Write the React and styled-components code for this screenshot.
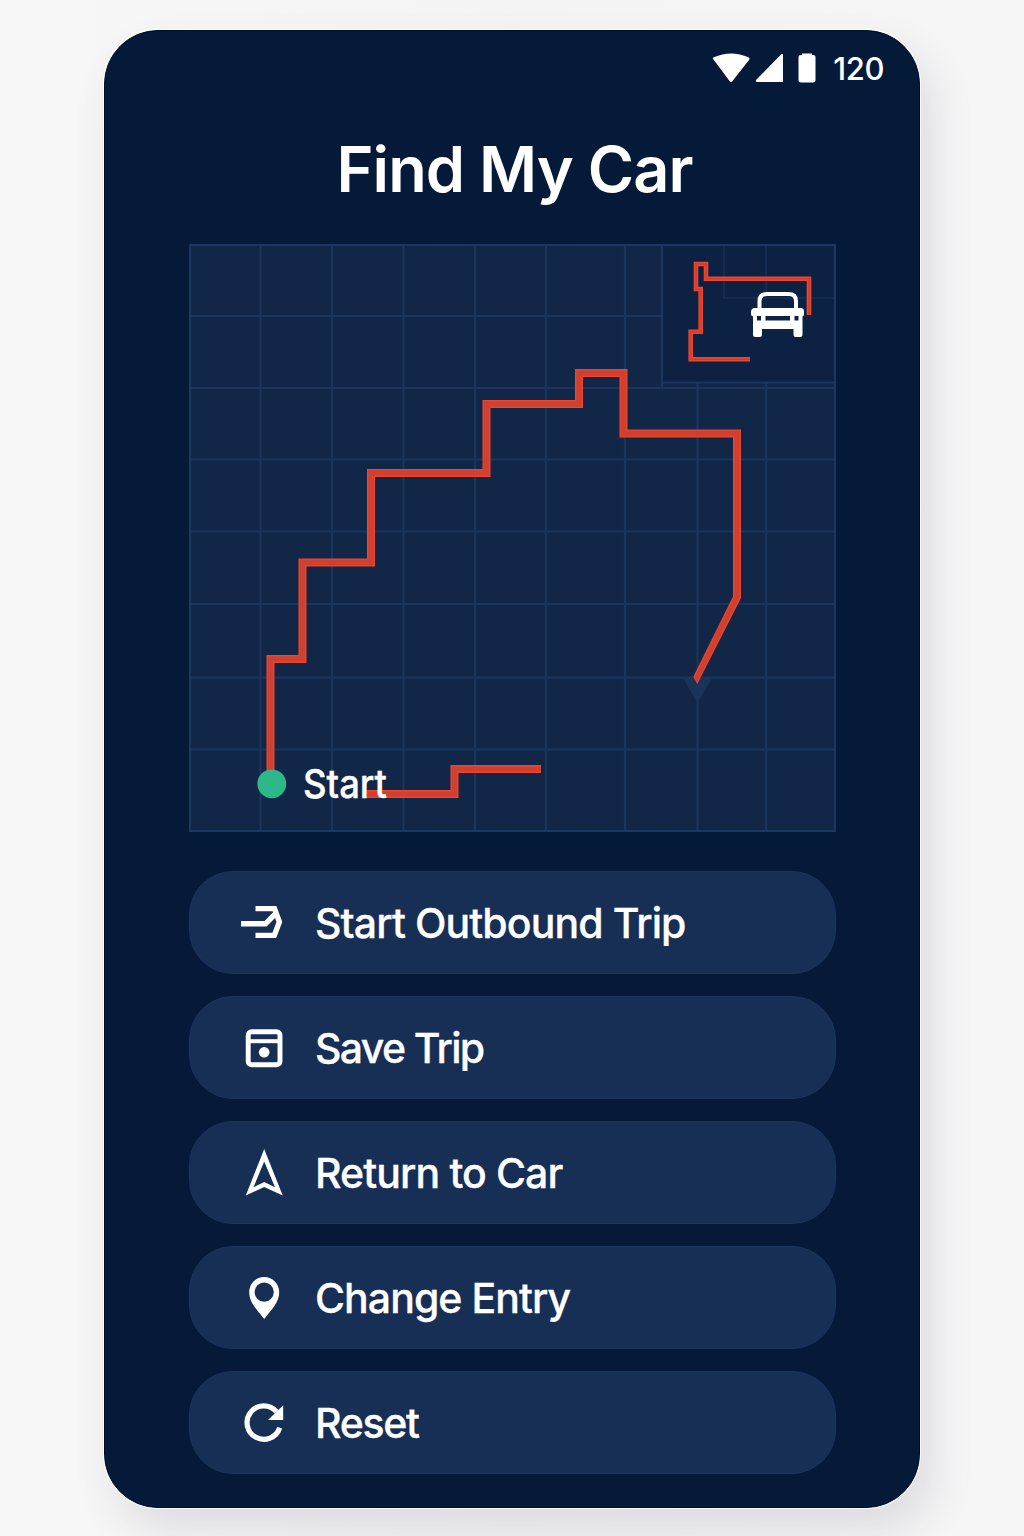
import React from "react";
import styled, { createGlobalStyle } from "styled-components";

const GlobalStyle = createGlobalStyle`
  * { box-sizing: border-box; }
  body {
    margin: 0;
    background: #f5f5f6;
    font-family: Inter, "Liberation Sans", sans-serif;
    color: #fff;
  }
`;

const Page = styled.main`
  display: flex;
  justify-content: center;
  height: 1536px;
  padding-top: 30px;
  overflow: hidden;
  background: linear-gradient(90deg, #f7f7f7, #f4f4f5 50%, #f6f6f6);
`;

const Phone = styled.section`
  width: 816px;
  height: 1478px;
  display: flex;
  flex-direction: column;
  align-items: center;
  border: 1px solid #020c25;
  border-radius: 54px;
  background: #051a38;
  box-shadow: 0 0 0 1px rgba(255, 255, 255, 0.8), 12px 22px 44px rgba(40, 40, 70, 0.12);
`;

const StatusBar = styled.header`
  align-self: stretch;
  height: 78px;
  flex: none;
  display: flex;
  justify-content: flex-end;
  align-items: center;
  padding-right: 35px;
`;

const StatusIcons = styled.svg`
  width: 106px;
  height: 32px;
  margin: 0 15px 4px 0;
`;

const StatusValue = styled.span`
  margin-bottom: 2px;
  font-size: 31px;
  font-weight: 500;
  line-height: 40px;
  letter-spacing: ${(p) => p.$tracking}px;
`;

const Title = styled.h1`
  margin: 21px 0 0 5px;
  height: 80px;
  flex: none;
  font-size: 63px;
  font-weight: 600;
  line-height: 79px;
  letter-spacing: ${(p) => p.$tracking}px;
  white-space: nowrap;
`;

const Map = styled.svg`
  width: 647px;
  height: 588px;
  flex: none;
  margin-top: 34px;
  display: block;
`;

const StartLabel = styled.text`
  font-size: 39px;
  font-weight: 500;
  fill: #fff;
  stroke: #fff;
  stroke-width: 0.4px;
`;

const Actions = styled.nav`
  width: 647px;
  margin-top: 38.5px;
  display: flex;
  flex-direction: column;
  gap: 22.2px;
`;

const ActionButton = styled.button`
  height: 103px;
  display: flex;
  align-items: center;
  gap: 25px;
  padding: 0 0 0 50.5px;
  border: 1px solid #1b355f;
  border-radius: 44px;
  background: #172e55;
  color: #fff;
  font-family: inherit;
  font-size: 41px;
  font-weight: 500;
  line-height: 52px;
  letter-spacing: ${(p) => p.$tracking}px;
  -webkit-text-stroke: 0.3px #fff;
  text-align: left;
  white-space: nowrap;
`;

const ActionLabel = styled.span`
  padding-top: 1px;
`;

const ActionIcon = styled.svg`
  width: 50px;
  height: 50px;
  flex: none;
`;

const ROUTE =
  "M270.5 772V659H302.5V562.5H371V473H486.5V404H579V373H623.5V433.5H737V597";
const BRANCH = "M366 794H454.5V769H541";
const MINI =
  "M750 359.3H690.7V331.8H700.7V289H696V264H706V278.7H809V315";

const Route = ({ d, width, inner, core = "#cf4030" }) => (
  <g fill="none" strokeMiterlimit="8">
    <path d={d} stroke="#ee452c" strokeWidth={width} />
    <path d={d} stroke={core} strokeWidth={inner} />
  </g>
);

const columns = [260.5, 332, 403.5, 475, 546, 625, 697.5, 766];
const rows = [316, 388, 459.5, 531.5, 604, 677.7, 749.5];

const RouteMap = () => (
  <Map viewBox="189 244 647 588">
    <rect x="189" y="244" width="647" height="588" fill="#122748" />
    <g stroke="#1b355d" strokeWidth="2.2">
      {columns.map((x) => (
        <line key={x} x1={x} x2={x} y1="245" y2="831" />
      ))}
      {rows.map((y) => (
        <line key={y} x1="190" x2="835" y1={y} y2={y} />
      ))}
    </g>
    <rect x="662" y="245" width="173" height="138" fill="#0d2142" />
    <g fill="none" stroke="#152c52" strokeWidth="2">
      <path d="M724 245V298H835M766 245V298" />
    </g>
    <path d="M662 245V387M662 382.5H835" stroke="#1c3660" strokeWidth="2" />
    <rect x="190" y="245" width="645" height="586" fill="none" stroke="#1c3862" strokeWidth="2" />
    <path d="M683 678H712L697.5 703Z" fill="#1a3358" />
    <Route d={ROUTE} width="8" inner="5.4" />
    <path d="M733 596.5L693.3 676.7L697.3 684L741 598V595H733Z" fill="#ee452c" />
    <path d="M734.3 596.5L694.6 677L697.3 681.8L739.7 597.5V595H734.3Z" fill="#cf4030" />
    <Route d={BRANCH} width="8" inner="5.2" />
    <Route d={MINI} width="4.6" inner="1.6" core="#cb3e34" />
    <circle cx="271.8" cy="783.8" r="14.4" fill="#2eb88a" />
    <StartLabel x="303" y="797.8" textLength="84" lengthAdjust="spacingAndGlyphs">
      Start
    </StartLabel>
    <g>
      <path
        d="M759.5 310V301Q759.5 294 767 294H788.5Q796 294 796 301V310"
        fill="none"
        stroke="#fff"
        strokeWidth="4"
      />
      <path
        fill="#fff"
        fillRule="evenodd"
        d="M754 308H801.500Q804 308.500 804 311V314Q804 316 802.5 316.500V334.500Q802.5 337 800 337H795.500Q793.500 337 793.500 334.500V329H762V334.500Q762 337 759.500 337H755.500Q753 337 753 334.500V316.500Q751 316 751 314V311Q751.500 308.500 754 308ZM757 316V320.500H761V316ZM765.500 316V320.500H790V316ZM794.500 316V320.500H798.500V316Z"
      />
    </g>
  </Map>
);

/* Every glyph sits on a 50px canvas, so all five line up in one column. */
const icons = {
  outbound: (
    <g fill="none" stroke="#fff" strokeWidth="5.400">
      <path d="M15.500 11.600H34.500L39.400 25L34.300 38.400H15.500" />
      <path d="M1 26.800H25.500L36.500 15.600" />
    </g>
  ),
  save: (
    <g fill="none" stroke="#fff">
      <rect x="8.200" y="9.700" width="31.800" height="33" rx="3.500" strokeWidth="4.900" />
      <path d="M8 19.200H40" strokeWidth="4" />
      <circle cx="24.200" cy="30.200" r="5.300" fill="#fff" stroke="none" />
    </g>
  ),
  navigate: (
    <path
      fill="#fff"
      fillRule="evenodd"
      d="M24.200 2L42.700 48.400L24.200 40L5.800 48.400ZM24.200 14.500L13.500 40.300L24.200 35L35 40.300Z"
    />
  ),
  pin: (
    <path
      fill="#fff"
      fillRule="evenodd"
      d="M24.200 4C15.800 4 9.200 10.700 9.200 19.200C9.200 29.500 17.500 37.200 24.200 46C31 37.200 39.200 29.500 39.200 19.200C39.200 10.700 32.600 4 24.200 4ZM24.200 9.500A9.600 9.600 0 1 1 24.200 28.700A9.600 9.600 0 1 1 24.200 9.500Z"
    />
  ),
  reset: (
    <g>
      <path d="M36.500 13.800A16.700 16.700 0 1 0 39.700 29.600" fill="none" stroke="#fff" strokeWidth="5.200" />
      <path d="M43.200 7.300V22H28Z" fill="#fff" />
    </g>
  ),
};

const actions = [
  { icon: "outbound", label: "Start Outbound Trip", tracking: -0.9 },
  { icon: "save", label: "Save Trip", tracking: -1.65 },
  { icon: "navigate", label: "Return to Car", tracking: -0.9 },
  { icon: "pin", label: "Change Entry", tracking: -0.95 },
  { icon: "reset", label: "Reset", tracking: -1.3 },
];

export default function App() {
  return (
    <>
      <GlobalStyle />
      <Page>
        <Phone>
          <StatusBar>
            <StatusIcons viewBox="712 52 106 32" fill="#fff">
              <path d="M713.500 59.500Q712 58.300 713.800 57.300Q731 49.500 748.500 57.300Q750.500 58.500 749 60L732.500 81Q731 83 729.500 81Z" />
              <path d="M783 54.500V82H757Q755 81.500 756.500 79.500L781 54.500Q782.500 53 783 54.500Z" />
              <path d="M802 53.500H812V55H813.500Q815.500 55 815.500 57V80Q815.500 82.500 813 82.500H801Q798.500 82.500 798.500 80V57Q798.500 55 800.500 55H802Z" />
            </StatusIcons>
            <StatusValue $tracking={-0.4}>120</StatusValue>
          </StatusBar>
          <Title $tracking={-0.95}>Find My Car</Title>
          <RouteMap />
          <Actions>
            {actions.map(({ icon, label, tracking }) => (
              <ActionButton key={icon} type="button" $tracking={tracking}>
                <ActionIcon viewBox="0 0 50 50">{icons[icon]}</ActionIcon>
                <ActionLabel>{label}</ActionLabel>
              </ActionButton>
            ))}
          </Actions>
        </Phone>
      </Page>
    </>
  );
}
